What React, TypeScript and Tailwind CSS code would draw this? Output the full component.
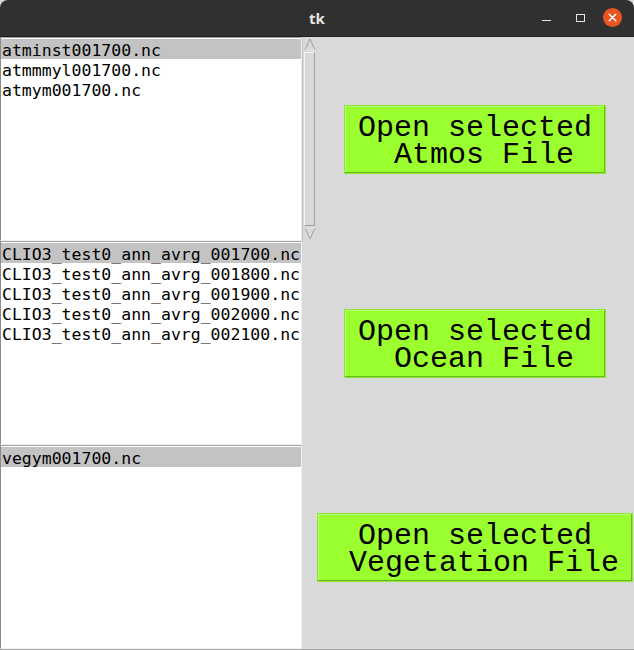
import React from "react";

const mono = { fontFamily: '"DejaVu Sans Mono", monospace' };
const btnFont = { fontFamily: '"Liberation Mono", monospace' };

function ListBox({ items, className = "" }: { items: string[]; className?: string }) {
  return (
    <div
      className={`w-[302px] bg-white border-t border-l border-t-[#a0a0a0] border-l-[#8a8a8a] border-b border-r border-b-[#f0f0f0] border-r-[#f0f0f0] pt-[1px] overflow-hidden ${className}`}
      style={mono}
    >
      {items.map((t, i) => (
        <div
          key={t}
          className={`h-[20px] leading-[20px] pl-[1px] text-[16.5px] text-black whitespace-pre ${i === 0 ? "bg-[#c3c3c3]" : ""}`}
        >
          <span className="relative top-[2px]">{t}</span>
        </div>
      ))}
    </div>
  );
}

function Scrollbar() {
  return (
    <div className="w-[14px] h-full bg-[#d9d9d9] border-l border-[#c0c0c0] flex flex-col">
      <div className="h-[15px] flex items-center justify-center">
        <svg width="12" height="13" viewBox="0 0 12 13">
          <polygon points="6,1 11,12 1,12" fill="#d9d9d9" stroke="#a0a0a0" strokeWidth="1" />
          <line x1="1" y1="12" x2="11" y2="12" stroke="#ffffff" strokeWidth="1" />
        </svg>
      </div>
      <div className="flex-1 mx-[1px] border border-t-[#f4f4f4] border-l-[#f4f4f4] border-b-[#a0a0a0] border-r-[#a0a0a0] bg-[#d9d9d9]" />
      <div className="h-[15px] flex items-center justify-center">
        <svg width="12" height="13" viewBox="0 0 12 13">
          <polygon points="1,1 11,1 6,12" fill="#d9d9d9" stroke="#a0a0a0" strokeWidth="1" />
          <line x1="1" y1="1" x2="11" y2="1" stroke="#ffffff" strokeWidth="1" />
        </svg>
      </div>
    </div>
  );
}

function GreenButton({ l1, l2 }: { l1: string; l2: string }) {
  return (
    <div
      className="bg-[#9bff2f] border border-[#8ee63a] shadow-[inset_-1px_-1px_0_#66bd16,inset_1px_1px_0_#b6ff6e] px-[13px] pt-[9px] pb-[4px] text-black text-[30px] leading-[27px] whitespace-pre text-center"
      style={btnFont}
    >
      <div>{l1}</div>
      <div>{l2}</div>
    </div>
  );
}

export default function App() {
  return (
    <div className="w-[634px] h-[650px] bg-[#d9d9d9] flex flex-col overflow-hidden">
      <div className="h-[37px] bg-[#303030] rounded-t-[8px] relative flex items-center justify-center border-b border-[#1e1e1e]">
        <span className="text-[15px] font-bold text-[#e6e6e6]" style={{ fontFamily: '"Noto Sans", sans-serif' }}>
          tk
        </span>
        <div className="absolute right-[12px] top-[8px] h-[19px] flex items-center">
          <div className="w-[9px] h-[1.5px] bg-[#e6e6e6] mt-[6px]" />
          <div className="w-[9px] h-[8px] border border-[#e6e6e6] ml-[25px]" />
          <div className="w-[19px] h-[19px] rounded-full bg-[#e95420] flex items-center justify-center ml-[18px]">
            <svg width="9" height="9" viewBox="0 0 9 9">
              <path d="M1.2 1.2 L7.8 7.8 M7.8 1.2 L1.2 7.8" stroke="#ffffff" strokeWidth="1.5" strokeLinecap="round" />
            </svg>
          </div>
        </div>
      </div>
      <div className="flex-1 flex border-b border-b-[#a8a8a8]">
        <div className="w-[316px] flex flex-col">
          <div className="h-[204px] flex">
            <ListBox items={["atminst001700.nc", "atmmmyl001700.nc", "atmym001700.nc"]} className="h-full" />
            <Scrollbar />
          </div>
          <ListBox
            items={[
              "CLIO3_test0_ann_avrg_001700.nc",
              "CLIO3_test0_ann_avrg_001800.nc",
              "CLIO3_test0_ann_avrg_001900.nc",
              "CLIO3_test0_ann_avrg_002000.nc",
              "CLIO3_test0_ann_avrg_002100.nc",
            ]}
            className="h-[204px]"
          />
          <ListBox items={["vegym001700.nc"]} className="flex-1" />
        </div>
        <div className="flex-1 flex flex-col">
          <div className="h-[204px] flex items-center justify-center">
            <GreenButton l1="Open selected" l2=" Atmos File" />
          </div>
          <div className="h-[204px] flex items-center justify-center">
            <GreenButton l1="Open selected" l2=" Ocean File" />
          </div>
          <div className="flex-1 flex items-center justify-center">
            <GreenButton l1="Open selected" l2=" Vegetation File" />
          </div>
        </div>
      </div>
    </div>
  );
}
